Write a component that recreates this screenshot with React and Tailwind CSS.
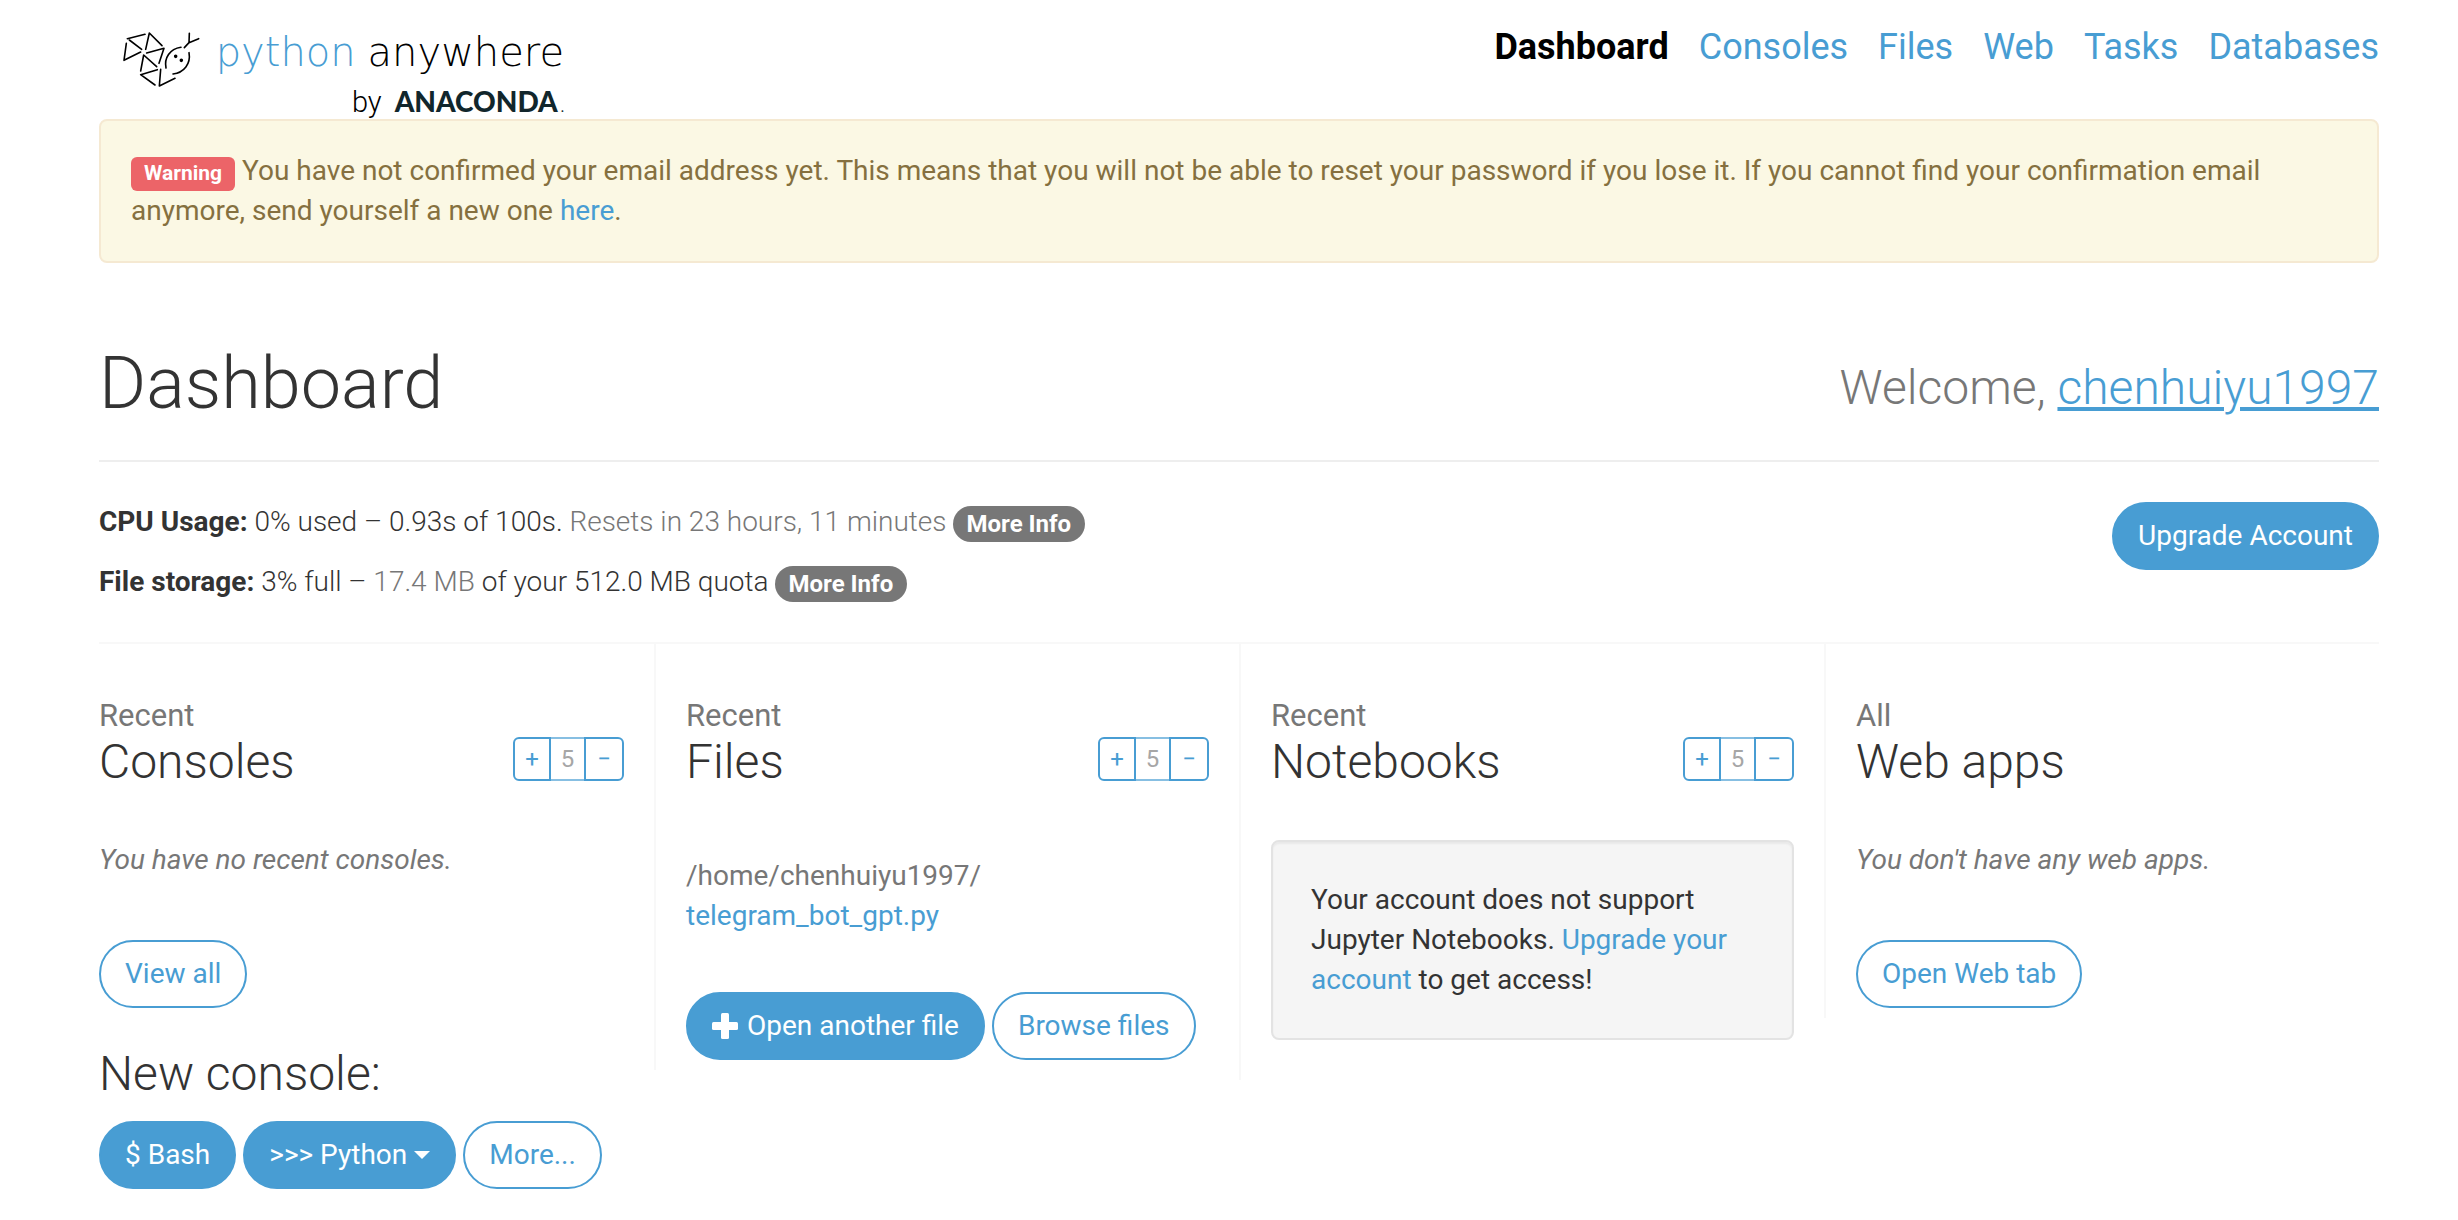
import React from "react";

const NAV = ["Consoles", "Files", "Web", "Tasks", "Databases"];

function Mark() {
  return (
    <svg viewBox="21 33 234 171" className="h-[57px] w-[78px] shrink-0" fill="none" stroke="#000" strokeWidth="4.8" strokeLinecap="round" strokeLinejoin="round" aria-hidden="true">
      <path d="M37 56L90 43M43 60L80 88M34 70L27 121L77 96" />
      <path d="M92 88L103 39L141 77M95 99L147 85L132 130" />
      <path d="M77 153L86 105L125 140M127 149L77 164L120 195M137 148L133 198L180 175" />
      <path d="M153 144C147 114 164 87 198 82M222 98C228 131 207 159 174 162M208 83L222 68L223 40M222 68L251 56" />
      <circle cx="182" cy="109" r="3" fill="#000" />
      <circle cx="199" cy="121" r="3" fill="#000" />
    </svg>
  );
}

function Logo() {
  return (
    <a href="#" className="flex w-[442px] shrink-0 flex-col items-end pt-[31px] text-black" aria-label="PythonAnywhere by Anaconda">
      <span className="flex h-[54px] w-full items-start justify-between">
        <Mark />
        <span className="flex gap-3 font-['DejaVu_Sans'] text-[40px] leading-[42px] font-extralight">
          <span className="text-[#489dd3]">python</span>
          <span>anywhere</span>
        </span>
      </span>
      <span className="flex items-baseline gap-[13px] text-[29px] leading-8 font-light">
        by
        <span className="flex items-baseline gap-[3px] font-['Lato'] text-[28px] font-black text-[#11262c]">
          ANACONDA<span className="text-sm font-normal">.</span>
        </span>
      </span>
    </a>
  );
}

const btn = "inline-flex items-center rounded-full border-2 border-[#489dd3] px-6 py-3 leading-10 whitespace-nowrap";
const solid = btn + " bg-[#489dd3] text-white";
const outline = btn + " bg-white text-[#489dd3]";

function Stepper({ label }) {
  return (
    <div className="flex h-11 text-2xl leading-9 text-[#489dd3]" role="group" aria-label={label}>
      <button className="flex w-[38px] items-center justify-center rounded-l-md border-2 border-[#489dd3]" aria-label="Show more">+</button>
      <button disabled className="flex w-[33px] items-center justify-center border-y-2 border-[#489dd3] text-[#777] opacity-65">5</button>
      <button className="flex w-10 items-center justify-center rounded-r-md border-2 border-[#489dd3]" aria-label="Show fewer">−</button>
    </div>
  );
}

function Panel({ kind, title, stepper, first, children }) {
  return (
    <section className={first ? "px-[30px] pb-[10px]" : "border-l-2 border-[#f8f8f8] px-[30px] pb-[10px]"}>
      <div className="flex items-end justify-between pt-[52px]">
        <h2 className="text-5xl leading-[54px] font-light">
          <small className="block text-[31px] leading-[39px] font-normal text-[#777]">{kind}</small>
          {title}
        </h2>
        {stepper && <div className="pb-2"><Stepper label={"Number of " + title} /></div>}
      </div>
      {children}
    </section>
  );
}

function Badge() {
  return <a href="#" className="ml-[6px] rounded-full bg-[#777] px-[14px] py-[6px] text-2xl leading-6 font-bold text-white">More Info</a>;
}

export default function App() {
  return (
    <div className="min-h-screen bg-white pr-[79px] pb-[30px] pl-[99px] font-['Roboto',sans-serif] text-[28px] leading-10 text-[#333]">
      <header className="flex h-[119px] items-start justify-between pl-[23px]">
        <Logo />
        <nav className="flex gap-[30px] pt-[22px] text-4xl leading-[50px] text-[#489dd3]">
          <a href="#" className="font-bold text-black">Dashboard</a>
          {NAV.map((n) => <a key={n} href="#">{n}</a>)}
        </nav>
      </header>

      <div role="alert" className="rounded-lg border-2 border-[#f5e9d2] bg-[#fbf8e4] p-[30px] text-[#85703f]">
        <span className="rounded-md bg-[#ec6468] px-[13px] pt-1 pb-[6px] text-[21px] leading-none font-bold text-white">Warning</span>{" "}
        You have not confirmed your email address yet. This means that you will not be able to reset your password if you lose it. If you cannot find your confirmation email anymore, send yourself a new one{" "}
        <a href="#" className="text-[#489dd3]">here</a>.
      </div>

      <div className="flex items-end justify-between border-b-2 border-[#eee] pt-20 pb-9">
        <h1 className="text-7xl leading-[81px] font-light">Dashboard</h1>
        <p className="pb-4 text-5xl leading-10 font-light text-[#777]">
          Welcome, <a href="#" className="text-[#489dd3] underline">chenhuiyu1997</a>
        </p>
      </div>

      <div className="flex items-start justify-between border-b-2 border-[#f8f8f8] pt-10 pb-10">
        <div className="flex flex-col gap-5 font-light">
          <p className="flex items-end whitespace-pre">
            <b className="font-bold">CPU Usage:</b> 0% used – 0.93s of 100s. <span className="text-[#777]">Resets in 23 hours, 11 minutes</span>
            <Badge />
          </p>
          <p className="flex items-end whitespace-pre">
            <b className="font-bold">File storage:</b> 3% full – <span className="text-[#777]">17.4 MB</span> of your 512.0 MB quota
            <Badge />
          </p>
        </div>
        <button className={solid}>Upgrade Account</button>
      </div>

      <main className="-mx-[30px] grid grid-cols-4 items-start">
        <Panel first kind="Recent" title="Consoles" stepper>
          <p className="mt-[51px] text-[#777] italic">You have no recent consoles.</p>
          <div className="mt-[60px]"><button className={outline}>View all</button></div>
          <h2 className="mt-[39px] text-5xl leading-[54px] font-light">New console:</h2>
          <div className="mt-5 flex gap-[7px]">
            <button className={solid}>$ Bash</button>
            <button className={solid}>
              &gt;&gt;&gt; Python
              <svg viewBox="0 0 16 8" className="ml-[7px] h-2 w-4" fill="currentColor" aria-hidden="true"><path d="M0 0h16L8 8z" /></svg>
            </button>
            <button className={outline}>More...</button>
          </div>
        </Panel>

        <Panel kind="Recent" title="Files" stepper>
          <p className="mt-[67px] flex flex-col items-start text-[#777]">
            /home/chenhuiyu1997/
            <a href="#" className="text-[#489dd3]">telegram_bot_gpt.py</a>
          </p>
          <div className="mt-14 flex gap-[7px]">
            <button className={solid}>
              <svg viewBox="0 0 26 26" className="mr-[9px] h-[26px] w-[26px]" fill="currentColor" aria-hidden="true">
                <rect x="9" width="8" height="26" rx="1.5" /><rect y="9" width="26" height="8" rx="1.5" />
              </svg>
              Open another file
            </button>
            <button className={outline}>Browse files</button>
          </div>
        </Panel>

        <Panel kind="Recent" title="Notebooks" stepper>
          <div className="mt-[51px] mb-[30px] rounded-lg border-2 border-[#e3e3e3] bg-[#f5f5f5] p-[38px] shadow-[inset_0_2px_2px_rgba(0,0,0,0.05)]">
            Your account does not support Jupyter Notebooks. <a href="#" className="text-[#489dd3]">Upgrade your account</a> to get access!
          </div>
        </Panel>

        <Panel kind="All" title="Web apps">
          <p className="mt-[51px] text-[#777] italic">You don't have any web apps.</p>
          <div className="mt-[60px]"><button className={outline}>Open Web tab</button></div>
        </Panel>
      </main>
    </div>
  );
}
